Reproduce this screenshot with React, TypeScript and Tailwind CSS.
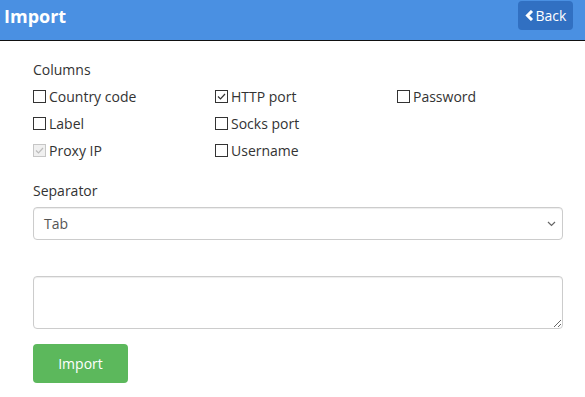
import React from "react";

function Box({ checked, disabled }: { checked?: boolean; disabled?: boolean }) {
  return (
    <span
      className={`inline-flex items-center justify-center w-[13px] h-[13px] border ${
        disabled ? "border-[#c6c6c6] bg-[#f0f0f0]" : "border-[#333] bg-white"
      }`}
    >
      {checked && (
        <svg width="11" height="11" viewBox="0 0 11 11">
          <path
            d="M2 5.5 L4.5 8 L9 3"
            fill="none"
            stroke={disabled ? "#bcbcbc" : "#333"}
            strokeWidth="1.2"
          />
        </svg>
      )}
    </span>
  );
}

function Item({ label, checked, disabled }: { label: string; checked?: boolean; disabled?: boolean }) {
  return (
    <label className="flex items-center gap-[3px] h-[27px]">
      <Box checked={checked} disabled={disabled} />
      <span>{label}</span>
    </label>
  );
}

export default function App() {
  return (
    <div className="w-[585px] h-[397px] bg-white text-[14px] text-[#333] overflow-hidden" style={{ fontFamily: '"Open Sans", sans-serif' }}>
      <div className="h-[41px] bg-[#4a90e2] border-b border-[#111] flex items-start justify-between pl-[4px] pr-[12px]">
        <div className="text-white font-bold text-[18px] leading-[30px] pt-[1px]">Import</div>
        <button className="mt-[1px] h-[29px] w-[55px] rounded-[4px] bg-[#3170c2] text-white text-[14px] flex items-center justify-center gap-[2px]">
          <svg width="9" height="11" viewBox="0 0 9 11">
            <path d="M7 1 L2.5 5.5 L7 10" fill="none" stroke="white" strokeWidth="3" />
          </svg>
          <span>Back</span>
        </button>
      </div>
      <div className="pl-[33px] pr-[22px] pt-[19px]">
        <div className="leading-[20px]">Columns</div>
        <div className="grid grid-cols-[182px_182px_1fr] mt-[3px]">
          <Item label="Country code" />
          <Item label="HTTP port" checked />
          <Item label="Password" />
          <Item label="Label" />
          <Item label="Socks port" />
          <div />
          <Item label="Proxy IP" checked disabled />
          <Item label="Username" />
          <div />
        </div>
        <div className="leading-[20px] mt-[17px]">Separator</div>
        <div className="mt-[6px] h-[33px] border border-[#ccc] rounded-[4px] shadow-[inset_0_1px_1px_rgba(0,0,0,0.075)] flex items-center justify-between pl-[10px] pr-[6px] text-[#555]">
          <span>Tab</span>
          <svg width="9" height="6" viewBox="0 0 9 6">
            <path d="M1 1 L4.5 4.5 L8 1" fill="none" stroke="#666" strokeWidth="1.2" />
          </svg>
        </div>
        <textarea className="block mt-[36px] w-full h-[53px] border border-[#ccc] rounded-[4px] shadow-[inset_0_1px_1px_rgba(0,0,0,0.075)]" />
        <button className="mt-[15px] w-[95px] h-[39px] rounded-[4px] bg-[#5cb85c] text-white text-[14px]">Import</button>
      </div>
    </div>
  );
}
